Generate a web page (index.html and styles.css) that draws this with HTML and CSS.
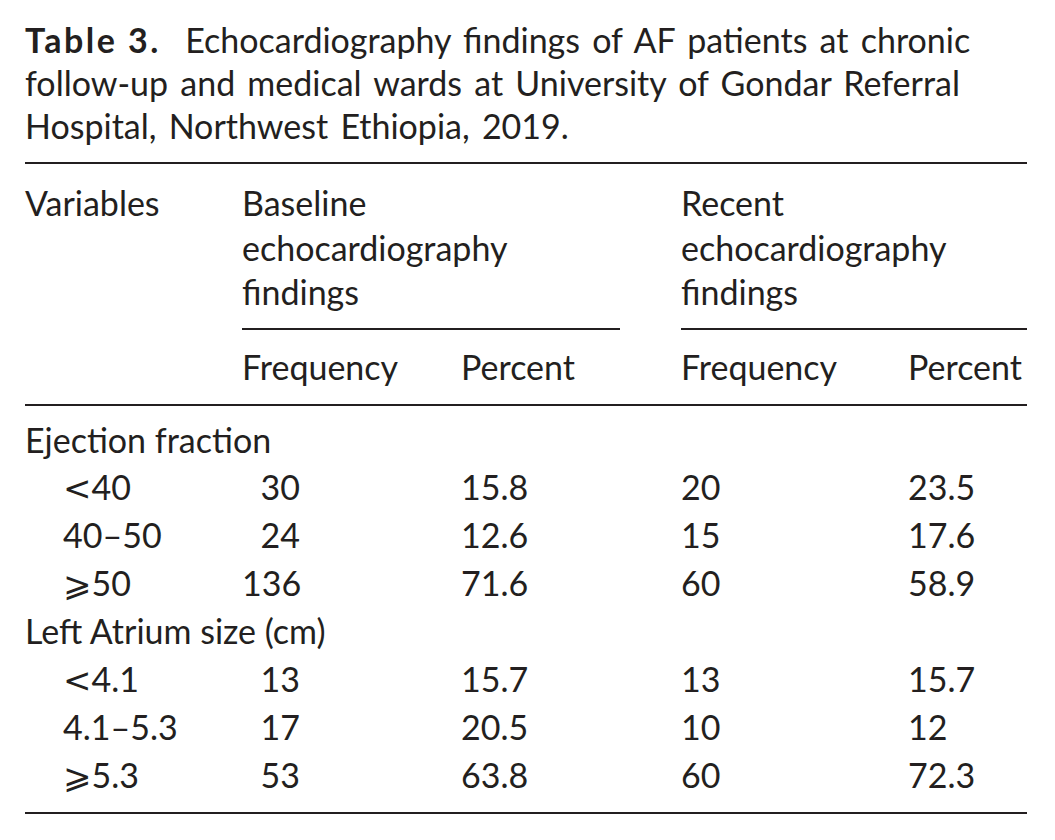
FILE: index.html
```html
<!DOCTYPE html>
<html>
<head>
<meta charset="utf-8">
<link rel="stylesheet" href="styles.css">
</head>
<body>
<div class="page">
  <p class="caption"><span class="label">Table 3.</span>&nbsp; Echocardiography findings of AF patients at chronic<br>follow-up and medical wards at University of Gondar Referral<br>Hospital, Northwest Ethiopia, 2019.</p>
  <div class="rule"></div>
  <div class="table">
    <div class="hvar">Variables</div>
    <div class="hgroup hbase">Baseline<br>echocardiography<br>findings</div>
    <div class="hgroup hrecent">Recent<br>echocardiography<br>findings</div>

    <div class="sub col2">Frequency</div>
    <div class="sub col3">Percent</div>
    <div class="sub col4">Frequency</div>
    <div class="sub col5">Percent</div>
    <div class="hrule"></div>

    <div class="group first">Ejection fraction</div>
    <div class="cell ind"><span class="sym">&lt;</span>40</div><div class="cell freq">30</div><div class="cell col3">15.8</div><div class="cell col4">20</div><div class="cell col5">23.5</div>
    <div class="cell ind">40–50</div><div class="cell freq">24</div><div class="cell col3">12.6</div><div class="cell col4">15</div><div class="cell col5">17.6</div>
    <div class="cell ind"><span class="sym">⩾</span>50</div><div class="cell freq">136</div><div class="cell col3">71.6</div><div class="cell col4">60</div><div class="cell col5">58.9</div>

    <div class="group">Left Atrium size (cm)</div>
    <div class="cell ind"><span class="sym">&lt;</span>4.1</div><div class="cell freq">13</div><div class="cell col3">15.7</div><div class="cell col4">13</div><div class="cell col5">15.7</div>
    <div class="cell ind">4.1–5.3</div><div class="cell freq">17</div><div class="cell col3">20.5</div><div class="cell col4">10</div><div class="cell col5">12</div>
    <div class="cell ind"><span class="sym">⩾</span>5.3</div><div class="cell freq">53</div><div class="cell col3">63.8</div><div class="cell col4">60</div><div class="cell col5">72.3</div>
  </div>
  <div class="rule bottom"></div>
</div>
</body>
</html>
```
FILE: styles.css
```css
html, body {
  margin: 0;
  padding: 0;
  background: #ffffff;
}
body {
  font-family: "Lato", "Open Sans", sans-serif;
  font-size: 34px;
  color: #231f20;
}
.page {
  width: 1002px;
  padding: 18px 0 0 25px;
}
.caption {
  margin: 0;
  line-height: 43px;
  word-spacing: 3.5px;
}
.label {
  font-weight: bold;
  letter-spacing: 2.5px;
  word-spacing: 0;
}
.rule {
  height: 2px;
  background: #231f20;
  margin-top: 15px;
}
.rule.bottom {
  margin-top: 13px;
}
.table {
  display: grid;
  grid-template-columns: 217px 219px 220px 227px 119px;
  margin-top: 17px;
}
.hvar {
  grid-column: 1;
  line-height: 44.5px;
}
.hgroup {
  line-height: 44.5px;
  border-bottom: 2px solid #231f20;
  padding-bottom: 13px;
}
.hbase {
  grid-column: 2 / 4;
  margin-right: 61px;
}
.hrecent {
  grid-column: 4 / 6;
}
.sub {
  line-height: 43px;
  padding-top: 15px;
  padding-bottom: 16px;
}
.col2 { grid-column: 2; }
.col3 { grid-column: 3; }
.col4 { grid-column: 4; }
.col5 { grid-column: 5; }
.hrule {
  grid-column: 1 / 6;
  height: 2px;
  background: #231f20;
}
.group {
  grid-column: 1 / 6;
  height: 47.9px;
  line-height: 47.9px;
}
.group.first {
  margin-top: 10px;
}
.cell {
  height: 47.9px;
  line-height: 47.9px;
}
.ind {
  grid-column: 1;
  padding-left: 38px;
}
.freq {
  grid-column: 2;
  text-align: right;
  padding-right: 161px;
}
.sym {
  font-family: "DejaVu Sans", sans-serif;
  line-height: 30px;
}
```
